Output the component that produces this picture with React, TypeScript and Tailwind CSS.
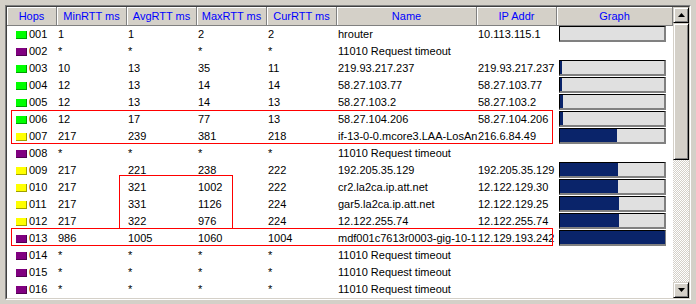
import React from "react";

type Row = {
  hop: string;
  c: "g" | "y" | "p";
  min: string;
  avg: string;
  max: string;
  cur: string;
  name: string;
  ip: string;
  bar: number | null;
};

const T = "11010 Request timeout";

const rows: Row[] = [
  { hop: "001", c: "g", min: "1", avg: "1", max: "2", cur: "2", name: "hrouter", ip: "10.113.115.1", bar: 0 },
  { hop: "002", c: "p", min: "*", avg: "*", max: "*", cur: "*", name: T, ip: "", bar: null },
  { hop: "003", c: "g", min: "10", avg: "13", max: "35", cur: "11", name: "219.93.217.237", ip: "219.93.217.237", bar: 2 },
  { hop: "004", c: "g", min: "12", avg: "13", max: "14", cur: "14", name: "58.27.103.77", ip: "58.27.103.77", bar: 2 },
  { hop: "005", c: "g", min: "12", avg: "13", max: "14", cur: "13", name: "58.27.103.2", ip: "58.27.103.2", bar: 3 },
  { hop: "006", c: "g", min: "12", avg: "17", max: "77", cur: "13", name: "58.27.104.206", ip: "58.27.104.206", bar: 3 },
  { hop: "007", c: "y", min: "217", avg: "239", max: "381", cur: "218", name: "if-13-0-0.mcore3.LAA-LosAngeles.savvis.net", ip: "216.6.84.49", bar: 57 },
  { hop: "008", c: "p", min: "*", avg: "*", max: "*", cur: "*", name: T, ip: "", bar: null },
  { hop: "009", c: "y", min: "217", avg: "221", max: "238", cur: "222", name: "192.205.35.129", ip: "192.205.35.129", bar: 58 },
  { hop: "010", c: "y", min: "217", avg: "321", max: "1002", cur: "222", name: "cr2.la2ca.ip.att.net", ip: "12.122.129.30", bar: 58 },
  { hop: "011", c: "y", min: "217", avg: "331", max: "1126", cur: "224", name: "gar5.la2ca.ip.att.net", ip: "12.122.129.25", bar: 59 },
  { hop: "012", c: "y", min: "217", avg: "322", max: "976", cur: "224", name: "12.122.255.74", ip: "12.122.255.74", bar: 59 },
  { hop: "013", c: "p", min: "986", avg: "1005", max: "1060", cur: "1004", name: "mdf001c7613r0003-gig-10-1.la3ca.ip.att.net", ip: "12.129.193.242", bar: 105 },
  { hop: "014", c: "p", min: "*", avg: "*", max: "*", cur: "*", name: T, ip: "", bar: null },
  { hop: "015", c: "p", min: "*", avg: "*", max: "*", cur: "*", name: T, ip: "", bar: null },
  { hop: "016", c: "p", min: "*", avg: "*", max: "*", cur: "*", name: T, ip: "", bar: null },
];

const cols = "grid grid-cols-[50px_70px_70px_70px_70px_140px_80px_116px]";

const swatch = {
  g: "bg-[#00ff00] border-r-[#00a000] border-b-[#00a000]",
  y: "bg-[#ffff00] border-r-[#a0a000] border-b-[#a0a000]",
  p: "bg-[#800080] border-r-[#500050] border-b-[#500050]",
};

const headers = ["Hops", "MinRTT ms", "AvgRTT ms", "MaxRTT ms", "CurRTT ms", "Name", "IP Addr", "Graph"];

function Arrow({ down }: { down?: boolean }) {
  return (
    <svg width="7" height="4" viewBox="0 0 7 4">
      <polygon points={down ? "0,0 7,0 3.5,4" : "3.5,0 7,4 0,4"} fill="#000" />
    </svg>
  );
}

const raised =
  "border border-t-[#d4d0c8] border-l-[#d4d0c8] border-r-black border-b-black bg-[#d4d0c8] shadow-[inset_1px_1px_0_#fff,inset_-1px_-1px_0_#808080]";

export default function App() {
  return (
    <div
      className="relative w-[696px] h-[304px] bg-[#d4d0c8] p-[5px] text-[11px] text-black"
      style={{ fontFamily: '"Liberation Sans", Arial, sans-serif' }}
    >
      <div className="w-[686px] h-[295px] border border-t-[#808080] border-l-[#808080] border-r-white border-b-white">
        <div className="h-full border border-t-[#404040] border-l-[#404040] border-r-[#d4d0c8] border-b-[#d4d0c8] bg-white flex">
          <div className="w-[666px] flex flex-col">
            <div className={`${cols} h-[19px] bg-[#d4d0c8]`}>
              {headers.map((h) => (
                <div
                  key={h}
                  className="flex items-center justify-center text-[#0000ff] border-r border-b border-r-[#808080] border-b-[#808080] shadow-[inset_1px_1px_0_#fff]"
                >
                  {h}
                </div>
              ))}
            </div>
            {rows.map((r) => (
              <div key={r.hop} className={`${cols} h-[17px] leading-[17px] whitespace-nowrap`}>
                <div className="flex items-center pl-[9px]">
                  <span className={`w-[11px] h-[8px] border-r border-b ${swatch[r.c]}`} />
                  <span className="ml-[2px]">{r.hop}</span>
                </div>
                <div className="pl-px">{r.min}</div>
                <div className="pl-px">{r.avg}</div>
                <div className="pl-px">{r.max}</div>
                <div className="pl-px">{r.cur}</div>
                <div className="pl-px overflow-hidden">{r.name}</div>
                <div className="pl-px overflow-hidden">{r.ip}</div>
                <div className="pl-[2px]">
                  {r.bar !== null && (
                    <div className="w-[107px] h-[16px] border-t border-l border-r-2 border-b-2 border-t-black border-l-black border-r-[#808080] border-b-[#808080] bg-[#e0e0e0]">
                      <div className="h-full bg-[#0a246a]" style={{ width: `${r.bar}px` }} />
                    </div>
                  )}
                </div>
              </div>
            ))}
          </div>
          <div className="w-[16px] flex flex-col">
            <div className={`h-[16px] flex items-center justify-center ${raised}`}>
              <Arrow />
            </div>
            <div className={`h-[137px] ${raised}`} />
            <div className="flex-1 bg-[repeating-conic-gradient(#ffffff_0%_25%,#d4d0c8_0%_50%)] bg-[length:2px_2px]" />
            <div className={`h-[16px] flex items-center justify-center ${raised}`}>
              <Arrow down />
            </div>
          </div>
        </div>
      </div>

      {/* red annotation boxes */}
      <div className="absolute left-[11px] top-[110px] w-[542px] h-[34px] border border-[#ff0000]" />
      <div className="absolute left-[119px] top-[175px] w-[114px] h-[54px] border border-[#ff0000]" />
      <div className="absolute left-[11px] top-[228px] w-[542px] h-[18px] border border-[#ff0000]" />
    </div>
  );
}
